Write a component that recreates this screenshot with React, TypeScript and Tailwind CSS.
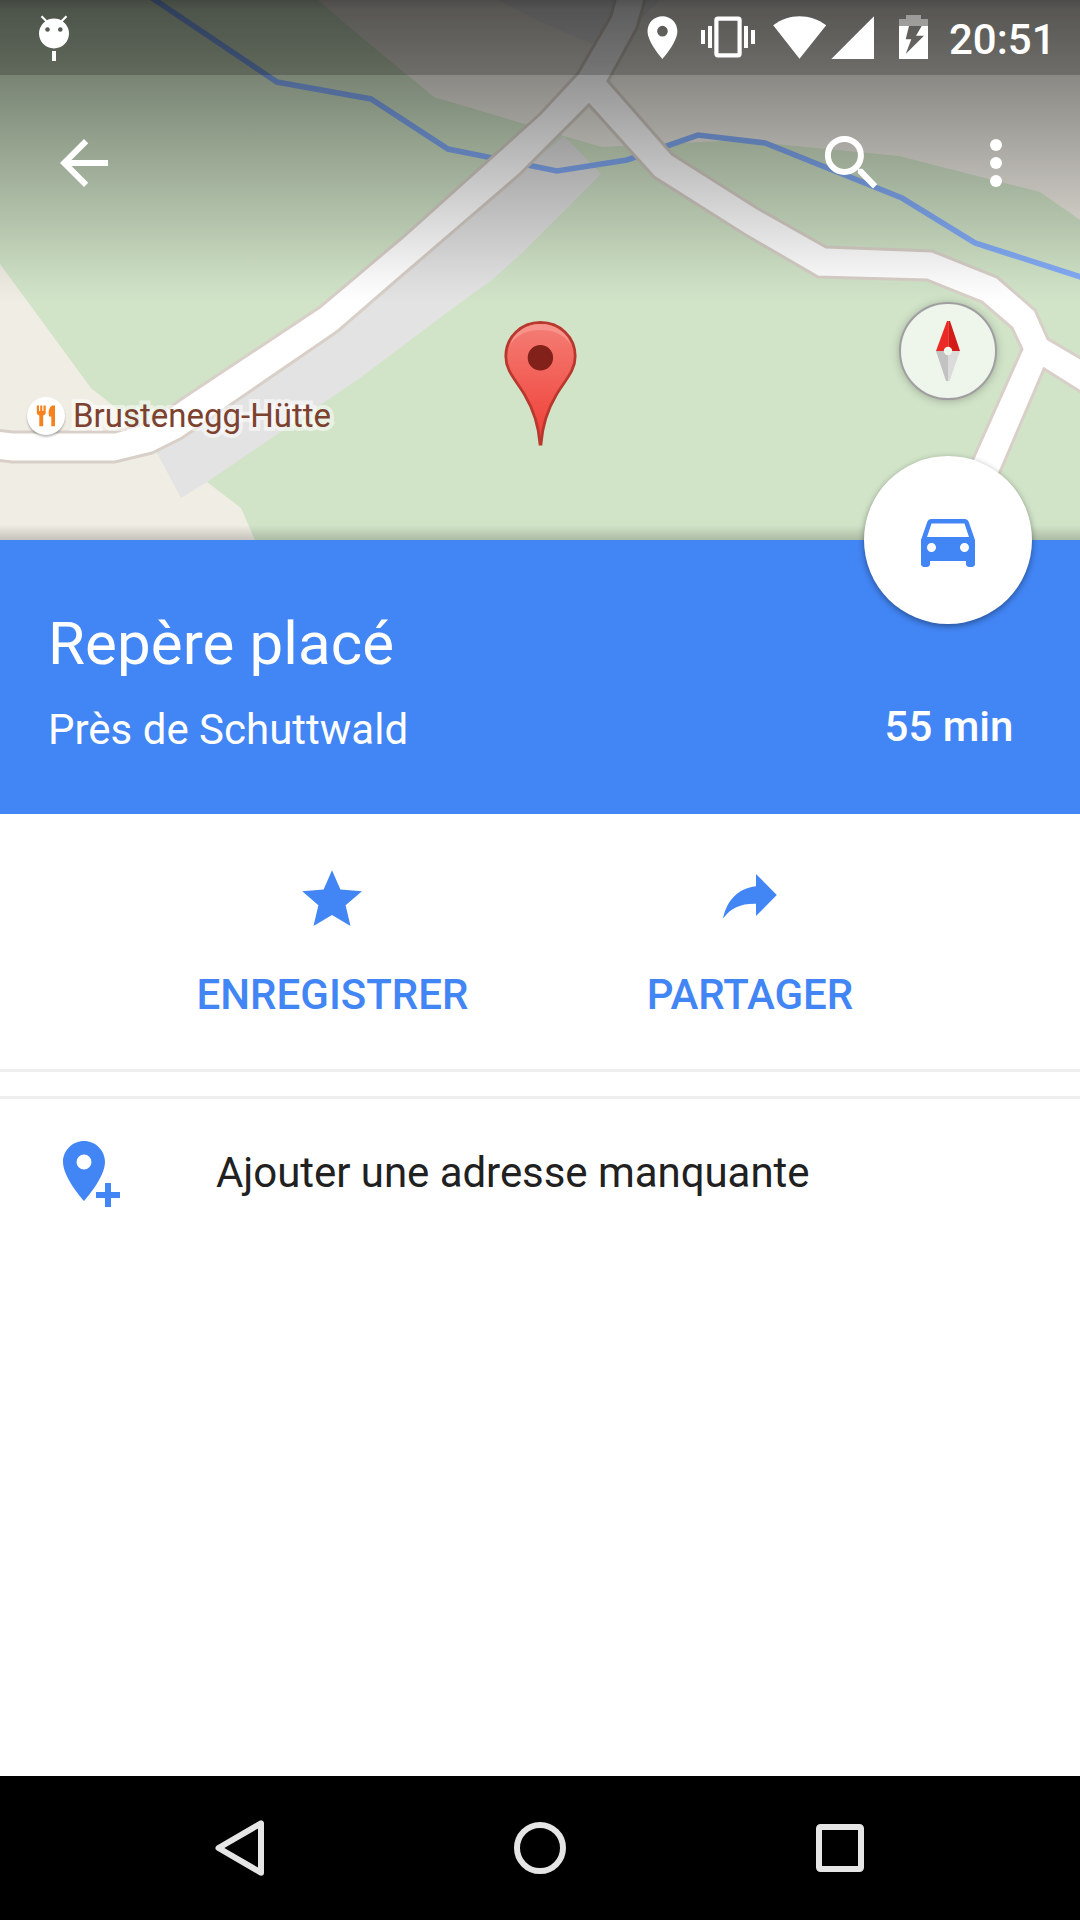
import React from "react";

const PIN = "M12 2C8.13 2 5 5.13 5 9c0 5.25 7 13 7 13s7-7.75 7-13c0-3.87-3.13-7-7-7zm0 9.5a2.5 2.5 0 1 1 0-5 2.5 2.5 0 0 1 0 5z";

function MapCanvas() {
  return (
    <svg className="absolute inset-0" width="1080" height="540" viewBox="0 0 1080 540">
      <defs>
        <linearGradient id="scrim" x1="0" y1="0" x2="0" y2="303" gradientUnits="userSpaceOnUse">
          <stop offset="0" stopColor="#000" stopOpacity="0.6" />
          <stop offset="0.03" stopColor="#000" stopOpacity="0.54" />
          <stop offset="0.25" stopColor="#000" stopOpacity="0.42" />
          <stop offset="0.57" stopColor="#000" stopOpacity="0.235" />
          <stop offset="0.92" stopColor="#000" stopOpacity="0.035" />
          <stop offset="1" stopColor="#000" stopOpacity="0" />
        </linearGradient>
        <linearGradient id="edge" x1="0" y1="525" x2="0" y2="540" gradientUnits="userSpaceOnUse">
          <stop offset="0" stopColor="#000" stopOpacity="0" />
          <stop offset="1" stopColor="#000" stopOpacity="0.18" />
        </linearGradient>
        <linearGradient id="pin" x1="0" y1="322" x2="0" y2="430" gradientUnits="userSpaceOnUse">
          <stop offset="0" stopColor="#f47f76" />
          <stop offset="1" stopColor="#f0443c" />
        </linearGradient>
      </defs>
      <rect width="1080" height="540" fill="#d1e4c8" />
      <path d="M318 0L360 36L434 97L525 124L564 136L602 147L720 141L765 143L899 156L1040 192L1080 220V0Z" fill="#efece4" />
      <path d="M498 0L540 22L592 44L630 30L660 0Z" fill="#e3e3e3" />
      <path d="M0 264L91 388L115 407L157 453L207 482L241 508L255 540H0Z" fill="#f0ede4" />
      <path d="M564 136L601 174L523 252L492 280L453 308L360 378L207 482L181 498L157 453L300 350Z" fill="#e3e3e3" />
      <path
        d="M152 -2L277 82L371 99L448 149L557 171L627 160L698 135L765 143L902 198L975 243L1084 278"
        fill="none"
        stroke="#84adf8"
        strokeWidth="5.6"
      />
      <path
        d="M616 -4L611 16L578 73L540 114L403 237L320 307L180 400L150 422L115 432H13L-4 430V460L12 462H115L152 453L182 438L338 331L398 279L519 175L589 105L654 177L744 234L818 277L927 280L982 302L1012 328L1022 349L973 459L950 510H982L1000 472L1044 369L1084 394V360L1048 339L1035 310L997 277L932 251L826 247L757 208L672 154L608 81L637 28L646 -4Z"
        fill="#fff"
        stroke="#d8d0c8"
        strokeWidth="3"
      />
      <rect width="1080" height="303" fill="url(#scrim)" />
      <rect y="525" width="1080" height="15" fill="url(#edge)" />

      <path
        d="M540.5 322.5C521 322.5 505.8 337.2 505.8 356.3C505.8 371 515.5 379.5 524.5 394.5C533.5 409.5 538.5 424 540 444H541C542.5 424 547.5 409.5 556.5 394.5C565.5 379.5 575.2 371 575.2 356.3C575.2 337.2 560 322.5 540.5 322.5Z"
        fill="url(#pin)"
        stroke="#b9382e"
        strokeWidth="2.8"
      />
      <path d="M510 345C514 332 526 324 540.5 324S567 332 571 345C564 334 553 330 540.5 330S517 334 510 345Z" fill="#f7938a" />
      <circle cx="540.4" cy="357.7" r="12.7" fill="#82201a" />
    </svg>
  );
}

function StatusBar() {
  return (
    <div className="relative flex h-[75px] items-center justify-between bg-black/20">
      <svg width="36" height="75" viewBox="36 0 36 75" className="ml-9" fill="#fff">
        <path
          fillRule="evenodd"
          d="M39 33.5a15 15 0 1 0 30 0a15 15 0 1 0-30 0ZM45.2 29.5a2.3 2.3 0 1 1 4.6 0a2.3 2.3 0 1 1-4.6 0ZM58 29.5a2.3 2.3 0 1 1 4.6 0a2.3 2.3 0 1 1-4.6 0Z"
        />
        <path d="M41.5 16.2L46.5 21.2M66.5 16.2L61.5 21.2" stroke="#fff" strokeWidth="2.2" />
        <rect x="52" y="51" width="4" height="10" />
      </svg>
      <div className="flex items-center pr-[28px]">
        <svg width="302" height="75" viewBox="640 0 302 75" fill="#fff">
          <path transform="translate(636.9 12) scale(2.13)" d={PIN} />
          <rect x="701" y="30" width="4" height="14" />
          <rect x="708" y="26" width="4" height="22" />
          <rect x="716.4" y="18.7" width="23.2" height="36.6" rx="1.5" fill="none" stroke="#fff" strokeWidth="4.2" />
          <rect x="744" y="26" width="4" height="22" />
          <rect x="751" y="30" width="4" height="14" />
          <path d="M799.5 58.8L773.2 25.2C789 13.2 810 13.2 826.2 25.2Z" />
          <path d="M831.3 59L874 16.3V59Z" />
          <path d="M906 15H921V19H928V26H899V19H906Z" fillOpacity="0.4" />
          <path fillRule="evenodd" d="M899 26H928V59H899ZM909 26L905.7 39.3H911.3L905.7 54L924 35.7H916L921.7 26Z" />
        </svg>
        <span className="w-[110px] pt-[4px] pl-[7px] text-[42px] leading-[50px] font-medium text-white">20:51</span>
      </div>
    </div>
  );
}

function Toolbar() {
  return (
    <div className="relative flex h-[176px] items-center pr-[48px] pl-[48px]">
      <svg width="72" height="72" viewBox="0 0 24 24" fill="#fff">
        <path d="M20 11H7.83l5.59-5.59L12 4l-8 8 8 8 1.41-1.41L7.83 13H20v-2z" />
      </svg>
      <svg width="72" height="72" viewBox="816 127 72 72" className="ml-auto">
        <circle cx="844.4" cy="155.4" r="16.5" fill="none" stroke="#fff" strokeWidth="6" />
        <path d="M862.3 168.8L877.2 184.2L873 188.4L857.8 173V168.8Z" fill="#fff" />
      </svg>
      <svg width="72" height="72" viewBox="0 0 24 24" className="ml-[72px]" fill="#fff">
        <circle cx="12" cy="6" r="2" />
        <circle cx="12" cy="12" r="2" />
        <circle cx="12" cy="18" r="2" />
      </svg>
    </div>
  );
}

function Poi() {
  return (
    <div className="absolute top-[396px] left-[27px] flex h-[39px] items-center">
      <div className="flex size-[38px] items-center justify-center rounded-full bg-white shadow-[0_2px_2px_rgba(0,0,0,0.25)]">
        <svg width="20" height="22" viewBox="35 404.5 20 22" fill="#f5821f">
          <path d="M35.8 405H38V410.5H39.2V405H41.3V410.5H42.5V405H44.7V412.5Q44.7 414.3 42.2 415V425.7H38.3V415Q35.8 414.3 35.8 412.5Z" />
          <path d="M54 405V425.7H50.3V416H48Q46.5 408 51 405Z" />
        </svg>
      </div>
      <span className="pt-px pl-[8px] text-[33px] leading-[38px] whitespace-nowrap text-[#7d412f] [paint-order:stroke] [-webkit-text-stroke:8px_rgba(255,255,255,0.5)]">
        Brustenegg-Hütte
      </span>
    </div>
  );
}

function Compass() {
  return (
    <div className="absolute top-[302px] left-[899px] size-[98px] rounded-full border-2 border-[#a09ea1] bg-[#eef5eb] shadow-[0_1px_8px_rgba(0,0,0,0.25)]">
      <svg width="94" height="94" viewBox="901 304 94 94">
        <path d="M948.3 321H947L936 351H948.3Z" fill="#ec2a25" />
        <path d="M948.3 321H950L960 351H948.3Z" fill="#d41b17" />
        <path d="M936 351L946 381H948V351Z" fill="#c2c2c2" />
        <path d="M960 351L949.5 381H948V351Z" fill="#dbdbdb" />
        <circle cx="948" cy="351" r="4.2" fill="#eef5eb" />
      </svg>
    </div>
  );
}

function PlaceHeader() {
  return (
    <div className="relative flex h-[274px] justify-between bg-[#4285f4] pr-[51px] pl-[48px] text-white">
      <div className="flex flex-col gap-[25px] pt-[68px]">
        <h1 className="text-[60px] leading-[72px] tracking-[0.1px]">Repère placé</h1>
        <p className="text-[42px] leading-[50px]">Près de Schuttwald</p>
      </div>
      <p className="w-[160px] pt-[162px] text-center text-[42px] leading-[50px] font-medium whitespace-nowrap">55 min</p>
      <button className="absolute top-[-84px] left-[864px] flex size-[168px] items-center justify-center rounded-full bg-white shadow-[0_2px_6px_rgba(0,0,0,0.4)]">
        <svg width="72" height="72" viewBox="0 0 24 24" fill="#4285f4" className="mt-[6px]">
          <path d="M18.92 5.01C18.72 4.42 18.16 4 17.5 4h-11c-.66 0-1.21.42-1.42 1.01L3 11v8c0 .55.45 1 1 1h1c.55 0 1-.45 1-1v-1h12v1c0 .55.45 1 1 1h1c.55 0 1-.45 1-1v-8l-2.08-5.99zM6.5 15c-.83 0-1.5-.67-1.5-1.5S5.67 12 6.5 12s1.5.67 1.5 1.5S7.33 15 6.5 15zm11 0c-.83 0-1.5-.67-1.5-1.5s.67-1.5 1.5-1.5 1.5.67 1.5 1.5-.67 1.5-1.5 1.5zM5 10l1.5-4.5h11L19 10H5z" />
        </svg>
      </button>
    </div>
  );
}

function Actions() {
  return (
    <div className="grid h-[258px] grid-cols-2 border-b-[3px] border-[#eeeeee] px-[123px] pt-[48px] text-[42px] leading-[50px] font-medium text-[#4285f4]">
      <button className="flex flex-col items-center gap-[36px]">
        <svg width="72" height="72" viewBox="296 862 72 72" fill="#4285f4">
          <path d="M332 870.3L340.4 889.4L362 891.3L345.6 905.2L350.5 926L332 915L313.5 926L318.4 905.2L302.2 891.3L323.6 889.4Z" />
        </svg>
        <span className="pl-[2px]">ENREGISTRER</span>
      </button>
      <button className="flex flex-col items-center gap-[36px]">
        <svg width="72" height="72" viewBox="713 862 72 72" fill="#4285f4">
          <path d="M756 874L776.8 895L756 916V903.7C741 903.4 731 907.5 723 918.6C726.5 902 736 888.8 756 886.2Z" />
        </svg>
        <span className="pl-[3px]">PARTAGER</span>
      </button>
    </div>
  );
}

function AddAddress() {
  return (
    <div className="mt-[24px] flex h-[147px] items-center border-t-[3px] border-[#eeeeee] pl-[48px]">
      <svg width="78" height="72" viewBox="0 0 26 24" fill="#4285f4">
        <path d={PIN} />
        <path d="M19 16h2v3h3v2h-3v3h-2v-3h-3v-2h3z" />
      </svg>
      <span className="pt-[3px] pl-[90px] text-[42px] leading-[50px] tracking-[-0.05px] text-[#212121]">Ajouter une adresse manquante</span>
    </div>
  );
}

function NavBar() {
  return (
    <div className="flex h-[144px] items-center justify-center gap-[228px] bg-black">
      <svg width="72" height="72" viewBox="204 1812 72 72" fill="none" stroke="#e5e5e5" strokeWidth="6" strokeLinejoin="round">
        <path d="M218.5 1848L261 1823.3V1872.7Z" />
      </svg>
      <svg width="72" height="72" viewBox="0 0 72 72" fill="none" stroke="#e5e5e5" strokeWidth="6">
        <circle cx="36" cy="36" r="23" />
      </svg>
      <svg width="72" height="72" viewBox="0 0 72 72" fill="none" stroke="#e5e5e5" strokeWidth="6">
        <rect x="15" y="15" width="42" height="42" rx="1.5" />
      </svg>
    </div>
  );
}

export default function App() {
  return (
    <div className="flex h-[1920px] w-[1080px] flex-col overflow-hidden bg-white font-['Roboto',sans-serif]">
      <div className="relative h-[540px] shrink-0">
        <MapCanvas />
        <StatusBar />
        <Toolbar />
        <Poi />
        <Compass />
      </div>
      <PlaceHeader />
      <Actions />
      <AddAddress />
      <div className="flex-1" />
      <NavBar />
    </div>
  );
}
